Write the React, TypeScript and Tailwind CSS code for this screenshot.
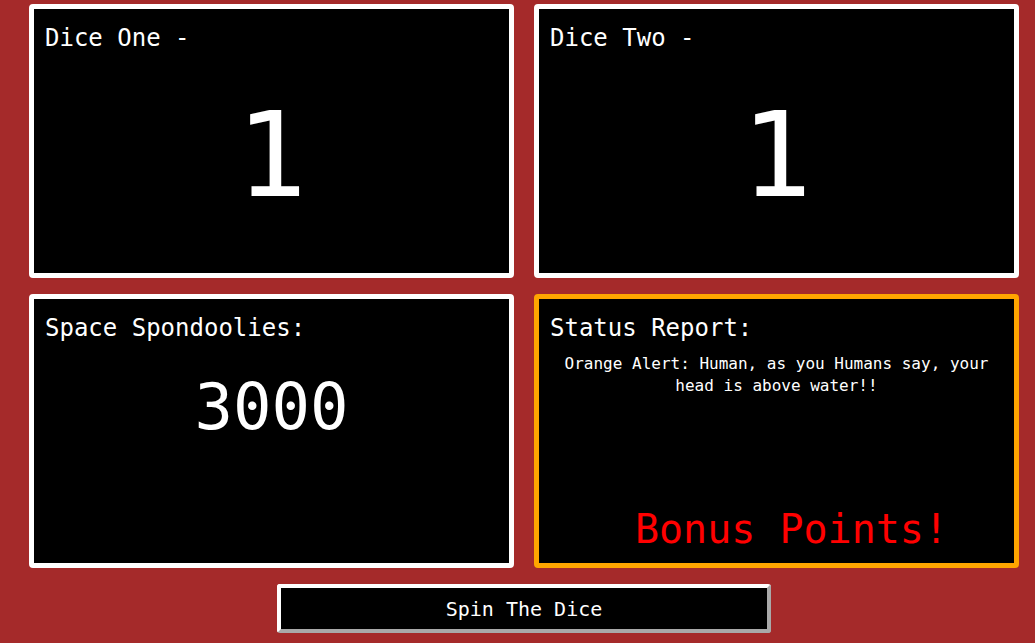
import React from 'react';

const mono = { fontFamily: '"DejaVu Sans Mono", "Liberation Mono", monospace' };

function DiceBox({ title, value }: { title: string; value: number }) {
    return (
        <div className="h-[274px] rounded-[4px] border-[5px] border-white bg-black pl-[11px] pr-[11px] pt-[15px] text-white">
            <h2 className="text-[24px] leading-[28px]">{title}</h2>
            <div className="mt-[44px] text-center text-[118px] leading-[118px]">{value}</div>
        </div>
    );
}

export default function App() {
    return (
        <div className="min-h-screen bg-[#a52a2a] pl-[29px] pt-[4px]" style={mono}>
            <div className="grid w-[990px] grid-cols-[485px_485px] gap-x-[20px] gap-y-[16px]">
                <DiceBox title="Dice One -" value={1} />
                <DiceBox title="Dice Two -" value={1} />

                <div className="h-[274px] rounded-[4px] border-[5px] border-white bg-black pl-[11px] pr-[11px] pt-[15px] text-white">
                    <h2 className="text-[24px] leading-[28px]">Space Spondoolies:</h2>
                    <div className="mt-[30px] text-center text-[64px] leading-[70px]">3000</div>
                </div>

                <div className="flex h-[274px] flex-col rounded-[4px] border-[5px] border-[#ffa500] bg-black pl-[11px] pr-[11px] pt-[15px] text-white">
                    <h2 className="text-[24px] leading-[28px]">Status Report:</h2>
                    <p className="mt-[11px] px-[10px] text-center text-[16px] leading-[22px]">
                        Orange Alert: Human, as you Humans say, your head is above water!!
                    </p>
                    <div className="mt-auto mb-[10px] pl-[30px] text-center text-[40px] leading-[48px] text-[#ff0000]">
                        Bonus Points!
                    </div>
                </div>
            </div>

            <div className="flex w-[990px] justify-center pt-[16px]">
                <button
                    className="h-[49px] w-[494px] rounded-[3px] border-[4px] border-t-white border-l-white border-b-[#a9a9a9] border-r-[#a9a9a9] bg-black text-[20px] text-white"
                    style={mono}
                >
                    Spin The Dice
                </button>
            </div>
        </div>
    );
}
